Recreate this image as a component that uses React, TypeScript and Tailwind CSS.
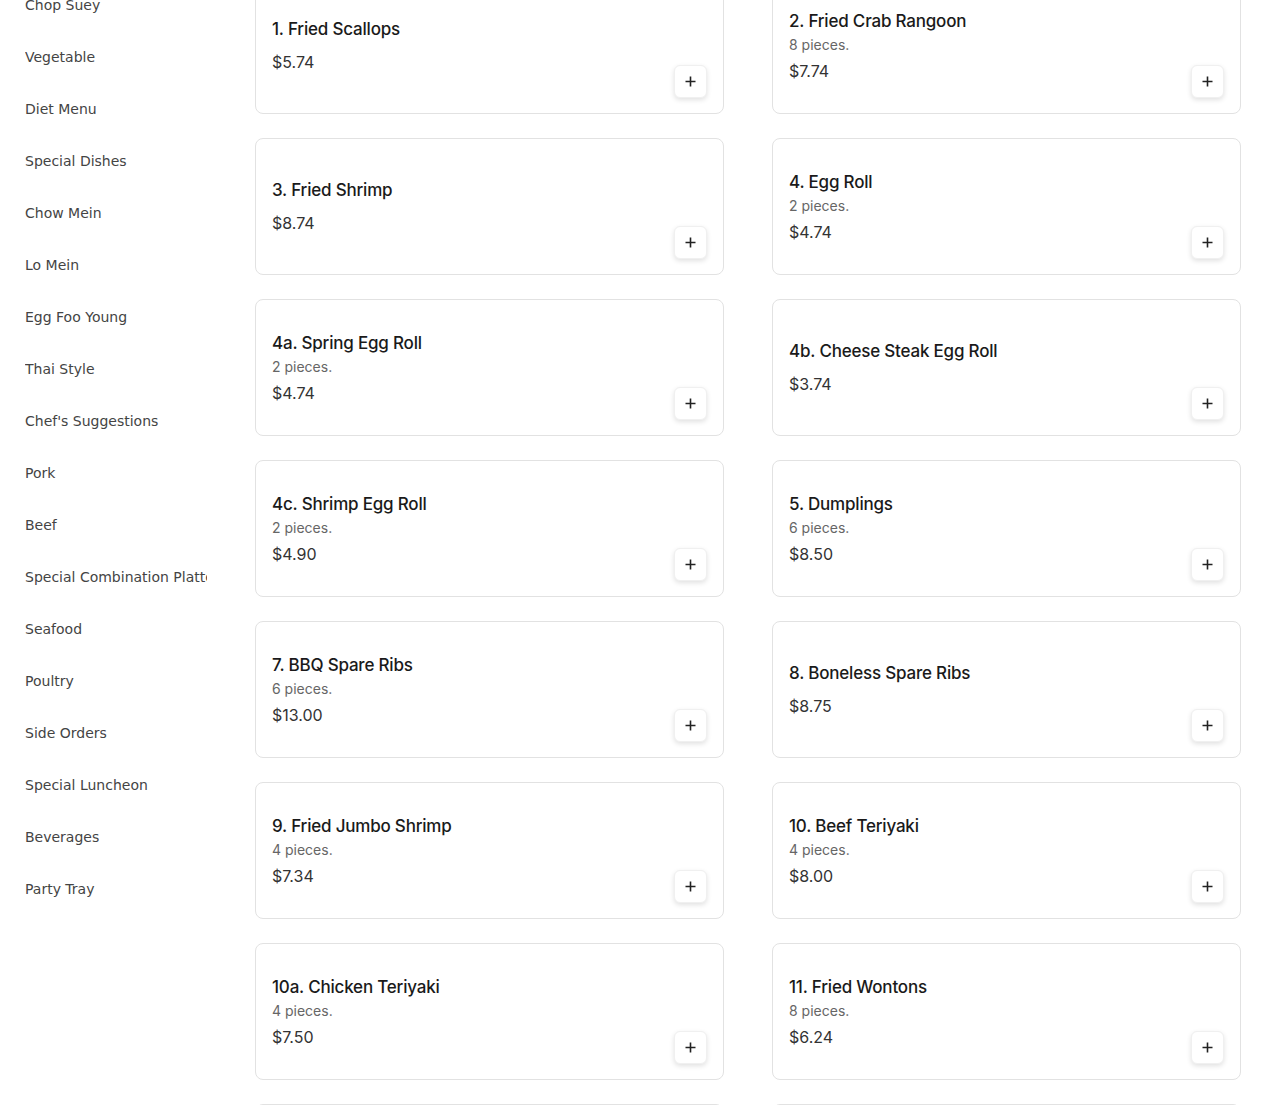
import React from 'react'

type Item = { name: string; desc?: string; price: string }

const categories = [
  'Chop Suey',
  'Vegetable',
  'Diet Menu',
  'Special Dishes',
  'Chow Mein',
  'Lo Mein',
  'Egg Foo Young',
  'Thai Style',
  "Chef's Suggestions",
  'Pork',
  'Beef',
  'Special Combination Platters',
  'Seafood',
  'Poultry',
  'Side Orders',
  'Special Luncheon',
  'Beverages',
  'Party Tray',
]

const items: Item[] = [
  { name: '1. Fried Scallops', price: '$5.74' },
  { name: '2. Fried Crab Rangoon', desc: '8 pieces.', price: '$7.74' },
  { name: '3. Fried Shrimp', price: '$8.74' },
  { name: '4. Egg Roll', desc: '2 pieces.', price: '$4.74' },
  { name: '4a. Spring Egg Roll', desc: '2 pieces.', price: '$4.74' },
  { name: '4b. Cheese Steak Egg Roll', price: '$3.74' },
  { name: '4c. Shrimp Egg Roll', desc: '2 pieces.', price: '$4.90' },
  { name: '5. Dumplings', desc: '6 pieces.', price: '$8.50' },
  { name: '7. BBQ Spare Ribs', desc: '6 pieces.', price: '$13.00' },
  { name: '8. Boneless Spare Ribs', price: '$8.75' },
  { name: '9. Fried Jumbo Shrimp', desc: '4 pieces.', price: '$7.34' },
  { name: '10. Beef Teriyaki', desc: '4 pieces.', price: '$8.00' },
  { name: '10a. Chicken Teriyaki', desc: '4 pieces.', price: '$7.50' },
  { name: '11. Fried Wontons', desc: '8 pieces.', price: '$6.24' },
  { name: '12. Teriyaki Chicken Wings', price: '$7.00' },
  { name: '13. Chicken Wings', price: '$7.00' },
]

function MenuCard({ item }: { item: Item }) {
  return (
    <div className="h-[137px] bg-white border border-[#e2e2e2] rounded-lg px-4 pb-[14px] flex items-stretch">
      <div className="flex-1 flex flex-col justify-center pt-[14px]">
        <div className="text-[17px] leading-[22px] font-medium text-[#1a1a1a] tracking-[-0.2px]">{item.name}</div>
        {item.desc ? (
          <div className="text-[14px] leading-[18px] text-[#666] mt-[4px]">{item.desc}</div>
        ) : null}
        <div className={`text-[16px] leading-[22px] text-[#333] ${item.desc ? 'mt-[6px]' : 'mt-[11px]'}`}>{item.price}</div>
      </div>
      <div className="flex items-end pb-[1px]">
        <button className="w-[33px] h-[33px] bg-white rounded-md border border-[#f0f0f0] shadow-[0_2px_5px_rgba(0,0,0,0.12)] flex items-center justify-center text-[#222]">
          <svg width="11" height="11" viewBox="0 0 11 11">
            <path d="M5.5 0.5v10M0.5 5.5h10" stroke="currentColor" strokeWidth="1.6" />
          </svg>
        </button>
      </div>
    </div>
  )
}

export default function App() {
  return (
    <div className="w-[1270px] h-[1105px] overflow-hidden bg-white flex">
      <aside className="w-[255px] shrink-0 pl-[25px] -mt-[21px]" style={{ fontFamily: '"DejaVu Sans", sans-serif' }}>
        <ul>
          {categories.map((c) => (
            <li key={c} className="h-[52px] flex items-center">
              <span className="block w-[182px] overflow-hidden whitespace-nowrap text-[14px] text-[#444]">{c}</span>
            </li>
          ))}
        </ul>
      </aside>
      <main
        className="flex-1 pr-[29px] -mt-[23px]"
        style={{ fontFamily: '"Inter", "Noto Sans", sans-serif' }}
      >
        <div className="grid grid-cols-2 gap-x-[48px] gap-y-[24px]">
          {items.map((it) => (
            <MenuCard key={it.name} item={it} />
          ))}
        </div>
      </main>
    </div>
  )
}
